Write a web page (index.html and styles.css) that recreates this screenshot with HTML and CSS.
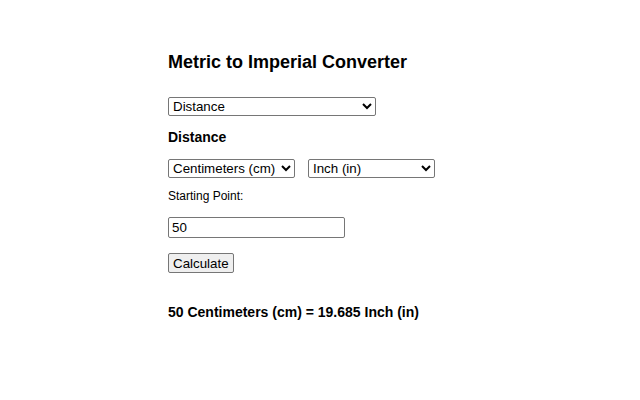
FILE: index.html
```html
<!DOCTYPE html>
<html>
<head>
<meta charset="utf-8">
<link rel="stylesheet" href="styles.css">
</head>
<body>
<div class="page">
  <h1 class="title">Metric to Imperial Converter</h1>
  <select class="sel sel-type"><option>Distance</option></select>
  <h3 class="section">Distance</h3>
  <div class="units">
    <select class="sel sel-from"><option>Centimeters (cm)</option></select>
    <select class="sel sel-to"><option>Inch (in)</option></select>
  </div>
  <p class="label">Starting Point:</p>
  <input class="field" type="text" value="50">
  <div class="actions"><button class="btn">Calculate</button></div>
  <p class="result">50 Centimeters (cm) = 19.685 Inch (in)</p>
</div>
</body>
</html>
```
FILE: styles.css
```css
html, body { margin: 0; padding: 0; background: #fff; }
body { font-family: "Liberation Sans", Arial, sans-serif; color: #000; }
.page { padding: 52px 0 0 168px; display: flex; flex-direction: column; align-items: flex-start; }
.title { font-size: 18px; font-weight: bold; margin: 0 0 25px 0; line-height: 20px; }
.sel { font-family: "Liberation Sans", Arial, sans-serif; font-size: 13.33px; height: 19px; border: 1px solid #767676; border-radius: 2px; background: #fff; color: #000; padding: 0; box-sizing: border-box; }
.sel-type { width: 208px; }
.section { font-size: 14px; font-weight: bold; margin: 13px 0 14px 0; line-height: 16px; }
.units { display: flex; gap: 13px; }
.sel-from { width: 127px; }
.sel-to { width: 127px; }
.label { font-size: 12px; margin: 11px 0 0 0; line-height: 14px; }
.field { font-family: "Liberation Sans", Arial, sans-serif; font-size: 13.33px; margin-top: 14px; width: 177px; height: 21px; box-sizing: border-box; border: 1px solid #767676; border-radius: 2px; padding: 0 3px; }
.actions { margin-top: 15px; }
.btn { font-family: "Liberation Sans", Arial, sans-serif; font-size: 13.33px; height: 20px; padding: 0 4px; border: 1px solid #767676; border-radius: 2px; background: #efefef; color: #000; }
.result { font-size: 14px; font-weight: bold; margin: 31px 0 0 0; line-height: 16px; }
```
